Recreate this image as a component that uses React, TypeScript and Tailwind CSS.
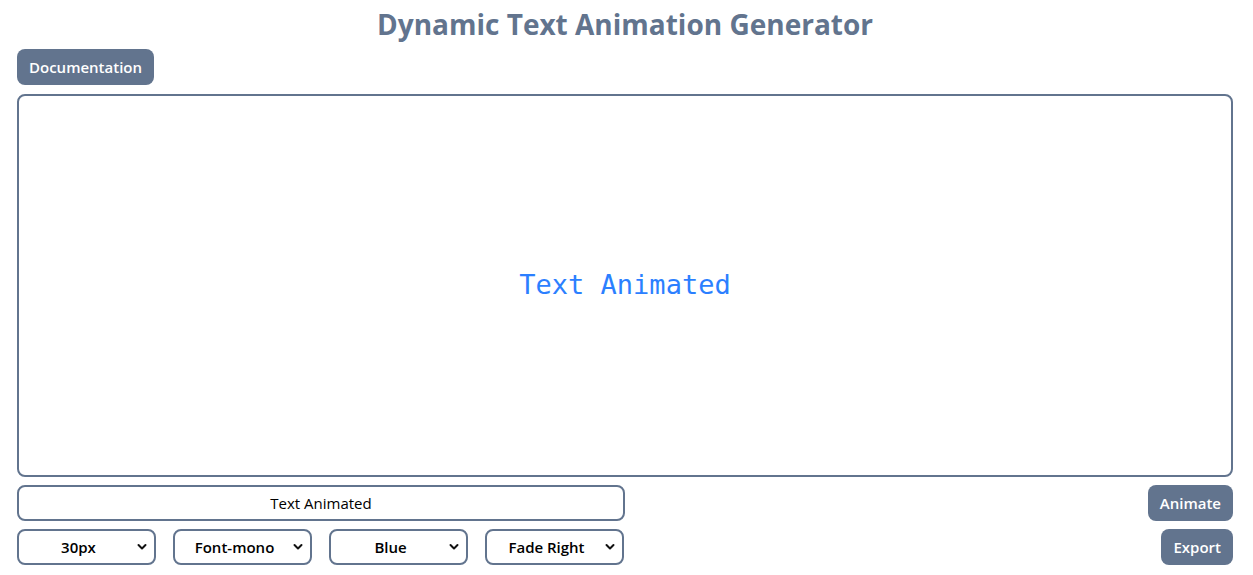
import React, { useState } from 'react'

const Chevron = () => (
  <svg
    className="pointer-events-none absolute right-[9px] top-1/2 -translate-y-1/2"
    width="10"
    height="7"
    viewBox="0 0 10 7"
  >
    <path d="M1.5 1.5 L5 5 L8.5 1.5" fill="none" stroke="#111" strokeWidth="2" strokeLinecap="round" strokeLinejoin="round" />
  </svg>
)

const Select: React.FC<{ value: string; options: string[]; onChange: (v: string) => void }> = ({
  value,
  options,
  onChange
}) => (
  <div className="relative w-[139px]">
    <select
      value={value}
      onChange={e => onChange(e.target.value)}
      className="h-[36px] w-full appearance-none rounded-lg border-2 border-slate-500 bg-white pl-2 pr-6 text-[15px] font-semibold text-black [text-align-last:center] outline-none"
    >
      {options.map(o => (
        <option key={o}>{o}</option>
      ))}
    </select>
    <Chevron />
  </div>
)

export default function App() {
  const [text, setText] = useState('Text Animated')
  const [size, setSize] = useState('30px')
  const [font, setFont] = useState('Font-mono')
  const [color, setColor] = useState('Blue')
  const [anim, setAnim] = useState('Fade Right')

  return (
    <div className="min-h-[575px] bg-white pl-[17px] pr-[20px] font-['Open_Sans','Noto_Sans',sans-serif]">
      {/* Header */}
      <h1 className="pt-[4px] text-center text-[28px] font-bold leading-[40px] text-slate-500">
        Dynamic Text Animation Generator
      </h1>
      <div className="mt-[5px]">
        <button className="h-[36px] rounded-lg bg-slate-500 px-3 text-[15px] font-semibold text-white">
          Documentation
        </button>
      </div>

      {/* Preview */}
      <div className="mt-[9px] flex h-[383px] items-center justify-center rounded-lg border-2 border-slate-500">
        <span className="font-['DejaVu_Sans_Mono','Liberation_Mono',monospace] text-[27px] text-blue-500">
          {text}
        </span>
      </div>

      {/* Controls */}
      <div className="mt-[8px] flex items-center justify-between">
        <input
          value={text}
          onChange={e => setText(e.target.value)}
          className="h-[36px] w-[608px] rounded-lg border-2 border-slate-500 text-center text-[15px] text-black outline-none"
        />
        <button className="h-[36px] rounded-lg bg-slate-500 px-3 text-[15px] font-semibold text-white">
          Animate
        </button>
      </div>
      <div className="mt-[8px] flex items-center justify-between">
        <div className="flex gap-[17px]">
          <Select value={size} onChange={setSize} options={['20px', '30px', '40px']} />
          <Select value={font} onChange={setFont} options={['Font-sans', 'Font-mono', 'Font-serif']} />
          <Select value={color} onChange={setColor} options={['Red', 'Blue', 'Green']} />
          <Select value={anim} onChange={setAnim} options={['Fade Left', 'Fade Right', 'Bounce']} />
        </div>
        <button className="h-[36px] rounded-lg bg-slate-500 px-3 text-[15px] font-semibold text-white">
          Export
        </button>
      </div>
    </div>
  )
}
